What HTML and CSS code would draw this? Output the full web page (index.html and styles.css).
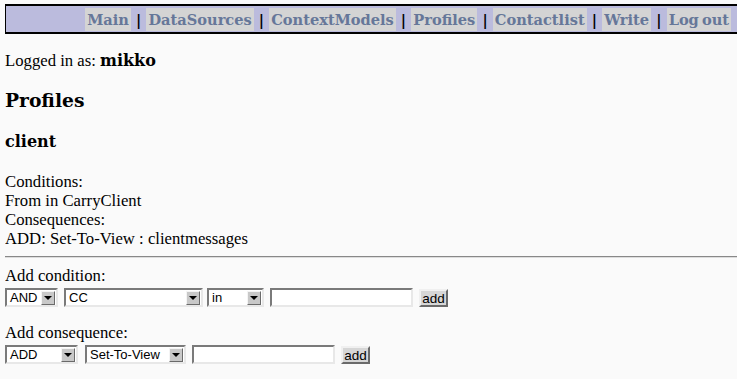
FILE: index.html
```html
<!DOCTYPE html>
<html lang="en">
<head>
    <meta charset="UTF-8">
    <title>Profiles</title>
    <link rel="stylesheet" href="styles.css">
</head>
<body>
    <div id="menubar">
        <a class="menulink" href="#">Main</a> |
        <a class="menulink" href="#">DataSources</a> |
        <a class="menulink" href="#">ContextModels</a> |
        <a class="menulink" href="#">Profiles</a> |
        <a class="menulink" href="#">Contactlist</a> |
        <a class="menulink" href="#">Write</a> |
        <a class="menulink logout" href="#">Log out</a>
    </div>

    <p class="login">Logged in as: <b>mikko</b></p>

    <h3>Profiles</h3>
    <h4>client</h4>

    <div class="rules">
        Conditions:<br>
        From in CarryClient<br>
        Consequences:<br>
        ADD: Set-To-View : clientmessages
    </div>
    <hr>

    <form class="addform">
        <div class="label">Add condition:</div>
        <div class="controls">
            <span class="sel w-and"><span class="selval">AND</span><span class="arrow"></span></span>
            <span class="sel w-cc"><span class="selval">CC</span><span class="arrow"></span></span>
            <span class="sel w-in"><span class="selval">in</span><span class="arrow"></span></span>
            <input type="text" class="textin">
            <button type="button" class="addbtn">add</button>
        </div>
    </form>

    <form class="addform second">
        <div class="label">Add consequence:</div>
        <div class="controls">
            <span class="sel w-add"><span class="selval">ADD</span><span class="arrow"></span></span>
            <span class="sel w-view"><span class="selval">Set-To-View</span><span class="arrow"></span></span>
            <input type="text" class="textin">
            <button type="button" class="addbtn">add</button>
        </div>
    </form>
</body>
</html>
```

FILE: styles.css
```css
html{
    overflow: hidden;
}

body{
    margin: 4px 0 0 5px;
    background-color: #fafafa;
    color: #000;
    font-family: "Liberation Serif", serif;
    font-size: 16.7px;
}

#menubar{
    margin-left: -1px;
    margin-right: -20px;
    padding: 2px 24px 1px 0;
    border: 2px solid #000;
    background-color: #bbbbdd;
    text-align: right;
    font-family: "DejaVu Serif", serif;
    font-weight: bold;
    font-size: 14.6px;
    line-height: 23px;
}

.menulink{
    display: inline-block;
    padding: 0 2px;
    background-color: #d4d4d4;
    color: #667799;
    text-decoration: none;
}

.logout{
    word-spacing: -2px;
}

.login{
    margin: 17px 0 0 0;
    line-height: 19px;
}

.login b{
    font-family: "DejaVu Serif", serif;
    font-size: 16px;
}

h3, h4{
    font-family: "DejaVu Serif", serif;
}

h3{
    margin: 19px 0;
    font-size: 18.7px;
}

h4{
    margin: 21px 0;
    font-size: 16px;
}

.rules{
    line-height: 19px;
}

hr{
    margin: 8px 0 8px 0;
    border: none;
    border-top: 1px solid #888;
    border-bottom: 1px solid #ddd;
}

.label{
    line-height: 19px;
    margin-top: 2px;
}

.second{
    margin-top: 16px;
}

.controls{
    display: flex;
    align-items: center;
    margin-top: 3px;
    font-family: "Liberation Sans", sans-serif;
    font-size: 13px;
}

.sel{
    display: flex;
    align-items: center;
    box-sizing: border-box;
    height: 19px;
    margin-right: 6px;
    border: 2px solid;
    border-color: #7a7a7a #e8e8e8 #e8e8e8 #7a7a7a;
    background-color: #fff;
}

.selval{
    flex: 1;
    padding-left: 3px;
}

.arrow{
    position: relative;
    box-sizing: border-box;
    width: 14px;
    height: 14px;
    margin-right: 1px;
    border: 1px solid;
    border-color: #f4f4f4 #6a6a6a #6a6a6a #f4f4f4;
    background-color: #c8c8c8;
}

.arrow::after{
    content: "";
    position: absolute;
    left: 2px;
    top: 4px;
    border-left: 4px solid transparent;
    border-right: 4px solid transparent;
    border-top: 4px solid #000;
}

.w-and{ width: 53px; }
.w-cc{ width: 139px; margin-right: 4px; }
.w-in{ width: 57px; }
.w-add{ width: 73px; margin-right: 7px; }
.w-view{ width: 101px; }

.textin{
    box-sizing: border-box;
    width: 143px;
    height: 19px;
    margin: 0 6px 0 0;
    border: 2px solid;
    border-color: #7a7a7a #e8e8e8 #e8e8e8 #7a7a7a;
    background-color: #fff;
}

.addbtn{
    box-sizing: border-box;
    width: 29px;
    height: 18px;
    padding: 0;
    border: 2px solid;
    border-color: #f0f0f0 #6a6a6a #6a6a6a #f0f0f0;
    background-color: #d6d6d6;
    font-family: "Liberation Sans", sans-serif;
    font-size: 13.5px;
    color: #000;
}
```
